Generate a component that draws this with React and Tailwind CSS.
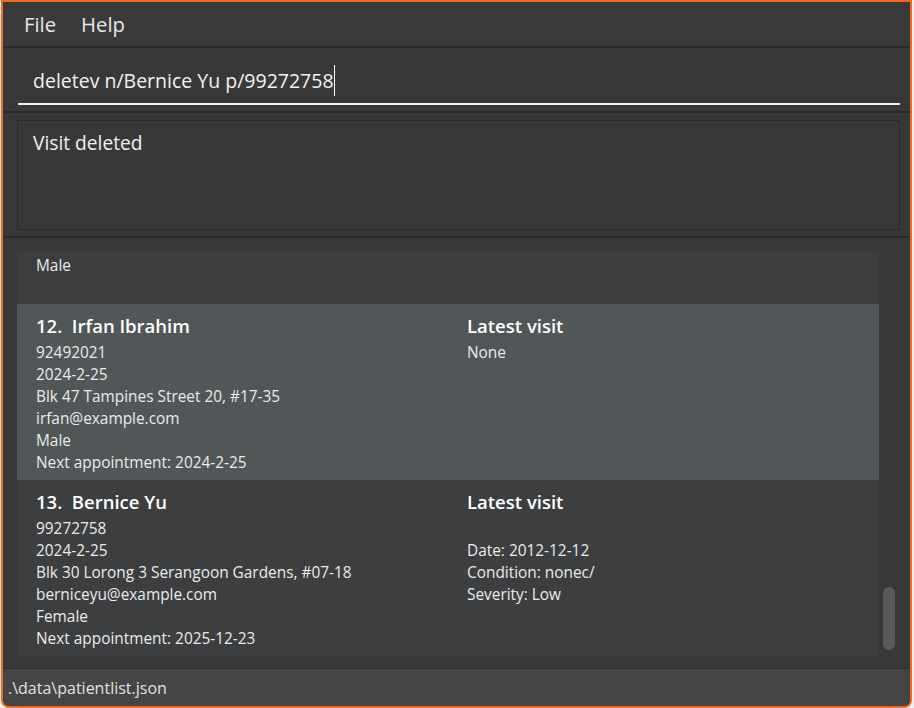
import React from 'react';

const patients = [
    {
        id: 12,
        name: 'Irfan Ibrahim',
        phone: '92492021',
        date: '2024-2-25',
        address: 'Blk 47 Tampines Street 20, #17-35',
        email: 'irfan@example.com',
        gender: 'Male',
        appointment: '2024-2-25',
        visit: ['None'],
    },
    {
        id: 13,
        name: 'Bernice Yu',
        phone: '99272758',
        date: '2024-2-25',
        address: 'Blk 30 Lorong 3 Serangoon Gardens, #07-18',
        email: 'berniceyu@example.com',
        gender: 'Female',
        appointment: '2025-12-23',
        visit: ['', 'Date: 2012-12-12', 'Condition: nonec/', 'Severity: Low'],
    },
];

function PatientCard({ patient }) {
    const odd = patient.id % 2 === 0;
    const lines = [patient.phone, patient.date, patient.address, patient.email, patient.gender];
    if (patient.appointment) lines.push(`Next appointment: ${patient.appointment}`);

    return (
        <div className={`flex h-[176px] pl-[19px] pt-[8px] ${odd ? 'bg-[#515658]' : 'bg-[#3c3e3f]'}`}>
            <div className="w-[431px] shrink-0">
                <div className="h-[28px] leading-[28px] text-[18.5px] font-semibold text-white whitespace-pre">
                    {patient.id}.  {patient.name}
                </div>
                <div className="mt-[2px] text-[15.4px] leading-[22px] text-[#ebebeb]">
                    {lines.map((line, i) => (
                        <div key={i}>{line}</div>
                    ))}
                </div>
            </div>
            <div>
                <div className="h-[28px] leading-[28px] text-[18.5px] font-semibold text-white">Latest visit</div>
                <div className="mt-[2px] text-[15.4px] leading-[22px] text-[#ebebeb]">
                    {patient.visit.map((line, i) => (
                        <div key={i} className="h-[22px]">{line}</div>
                    ))}
                </div>
            </div>
        </div>
    );
}

export default function App() {
    return (
        <div
            className="w-[914px] h-[708px] bg-[#ededed] overflow-hidden"
            style={{ fontFamily: '"Open Sans", "Noto Sans", sans-serif' }}
        >
            <div className="ml-[1px] w-[911px] h-[708px] border-2 border-[#f6691a] rounded-b-[8px] overflow-hidden bg-[#383838] flex flex-col">
                {/* Menu bar */}
                <div className="h-[46px] shrink-0 flex items-center gap-[25px] pl-[21px] bg-[#3a3a3a] border-b-2 border-[#2a2a2a] text-[20.3px] text-[#e8e8e8]">
                    <span>File</span>
                    <span>Help</span>
                </div>

                {/* Command box */}
                <div className="h-[65px] shrink-0 pt-[10px] border-b-2 border-[#2a2a2a]">
                    <div className="ml-[15px] mr-[10px] h-[47px] border-b-2 border-[#f2f2f2] pl-[15px] flex items-center text-[19.5px] text-[#f2f2f2]">
                        <span className="whitespace-pre">deletev n/Bernice Yu p/99272758</span>
                        <span className="inline-block w-[1px] h-[31px] bg-white"></span>
                    </div>
                </div>

                {/* Result display */}
                <div className="h-[125px] shrink-0 pt-[7px] border-b-2 border-[#2a2a2a]">
                    <div className="ml-[14px] mr-[10px] h-[110px] border border-[#2a2a2a] pl-[15px] pt-[8px] text-[19.2px] leading-[27px] text-[#f0f0f0]">
                        Visit deleted
                    </div>
                </div>

                {/* Patient list, scrolled so only the tail of card 11 shows */}
                <div className="h-[430px] shrink-0 pt-[13px] pl-[14px] flex">
                    <div className="w-[862px] h-[405px] overflow-hidden">
                        <div className="h-[53px] bg-[#3c3e3f] pl-[19px] pt-[4px] text-[15.4px] leading-[22px] text-[#ebebeb]">
                            Male
                        </div>
                        {patients.map((p) => (
                            <PatientCard key={p.id} patient={p} />
                        ))}
                    </div>
                    <div className="ml-[4px] w-[12px] h-[405px]">
                        <div className="mt-[336px] h-[63px] w-[12px] rounded-full bg-[#5a5a5a]"></div>
                    </div>
                </div>

                {/* Status bar */}
                <div className="flex-1 border-t border-[#2e2e2e] bg-[#454545] pl-[5px] flex items-center text-[16px] text-[#e2e2e2]">
                    .\data\patientlist.json
                </div>
            </div>
        </div>
    );
}
